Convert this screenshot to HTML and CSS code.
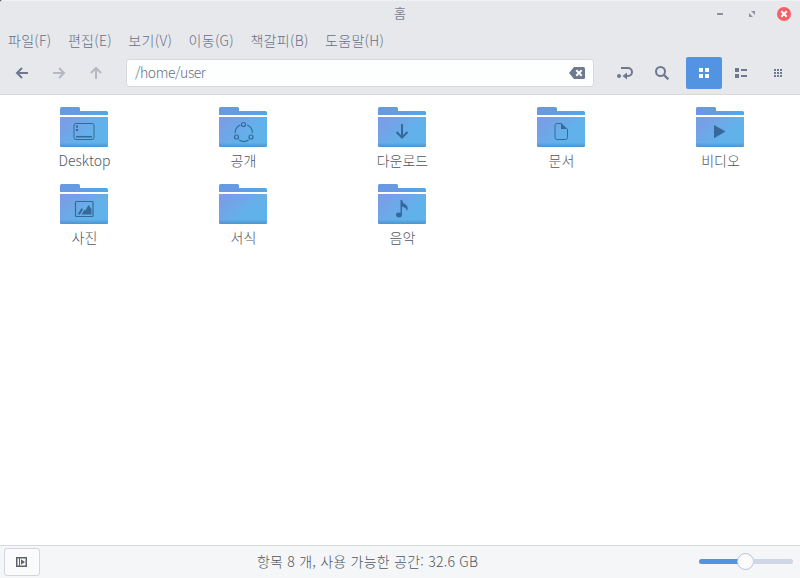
FILE: index.html
```html
<!DOCTYPE html>
<html lang="ko">
<head>
<meta charset="utf-8">
<title>홈</title>
<link rel="stylesheet" href="styles.css">
</head>
<body>
<svg class="defs" width="0" height="0">
  <defs>
    <linearGradient id="front" x1="0" y1="0.15" x2="1" y2="0.85">
      <stop offset="0.1" stop-color="#789fe6"/><stop offset="0.6" stop-color="#62b1ea"/><stop offset="1" stop-color="#5fb3ea"/>
    </linearGradient>
    <linearGradient id="back" x1="0" y1="0" x2="1" y2="0">
      <stop offset="0.3" stop-color="#6999e2"/><stop offset="1" stop-color="#4fa8e8"/>
    </linearGradient>
    <linearGradient id="shade" x1="0" y1="0" x2="0" y2="1">
      <stop offset="0.85" stop-color="#3478c4" stop-opacity="0"/><stop offset="1" stop-color="#3478b8" stop-opacity="0.5"/>
    </linearGradient>
    <symbol id="folder" viewBox="0 0 48 40">
      <path fill="url(#back)" d="M0 8V1.5Q0 0 1.5 0H18.5Q20 0 20 1.500V4H46.500Q48 4 48 5.500V8Z"/>
      <path fill="url(#front)" d="M0 10H48V38.500Q48 40 46.500 40H1.500Q0 40 0 38.500Z"/>
      <path fill="url(#shade)" d="M0 10H48V38.500Q48 40 46.500 40H1.500Q0 40 0 38.500Z"/>
    </symbol>
  </defs>
</svg>
<div class="window">
  <header class="chrome">
    <div class="titlebar">
      <span class="title">홈</span>
      <div class="controls">
        <svg width="14" height="14"><path fill="#8d929f" d="M4 6h6v2H4z"/></svg>
        <svg width="14" height="14"><path fill="#8d929f" d="M6 4h4v4zM4 6v4h4z"/></svg>
        <svg width="14" height="14"><circle cx="7" cy="7" r="7" fill="#f46067"/><path stroke="#fff" stroke-width="2" d="M4.300 4.300l5.400 5.400M9.700 4.300l-5.400 5.400"/></svg>
      </div>
    </div>
    <nav class="menu">
      <span>파일(F)</span><span>편집(E)</span><span>보기(V)</span><span>이동(G)</span><span>책갈피(B)</span><span>도움말(H)</span>
    </nav>
    <div class="toolbar">
      <div class="nav">
        <svg class="arrow" width="14" height="14"><path d="M13 7H2.500M7 2L2 7l5 5"/></svg>
        <svg class="arrow off" width="14" height="14"><path d="M1 7h10.500M7 2l5 5-5 5"/></svg>
        <svg class="arrow off" width="14" height="14"><path d="M7 13V2.500M2 7l5-5 5 5"/></svg>
      </div>
      <div class="path"><span>/home/user</span>
        <svg width="16" height="12"><path fill="#6e788f" d="M0 6L5 0h9.500Q16 0 16 1.500v9Q16 12 14.500 12H5z"/><path stroke="#fff" stroke-width="2" d="M7.300 3.300l5.400 5.400M12.700 3.300L7.300 8.700"/></svg>
      </div>
      <div class="tools">
        <div class="tool"><svg width="16" height="14"><circle cx="2" cy="10" r="2" fill="#6e788f"/><path fill="none" stroke="#6e788f" stroke-width="2" d="M4 2h7a4 4 0 0 1 0 8H8"/><path fill="#6e788f" d="M10 6.500v7L5.500 10z"/></svg></div>
        <div class="tool"><svg width="14" height="14"><circle cx="5.500" cy="5.500" r="4.500" fill="none" stroke="#6e788f" stroke-width="2"/><path stroke="#6e788f" stroke-width="2.300" d="M8.700 8.700L13.300 13.300"/></svg></div>
        <div class="tool active"><svg width="10" height="10"><path fill="#fff" d="M0 0h4v4H0zM6 0h4v4H6zM0 6h4v4H0zM6 6h4v4H6z"/></svg></div>
        <div class="tool"><svg width="12" height="10"><path fill="#6e788f" d="M0 0h4v4H0zM6 1h6v2H6zM0 6h4v4H0zM6 7h6v2H6z"/></svg></div>
        <div class="tool"><svg width="8" height="8"><path fill="#6e788f" d="M0 0h2v2H0zM3 0h2v2H3zM6 0h2v2H6zM0 3h2v2H0zM3 3h2v2H3zM6 3h2v2H6zM0 6h2v2H0zM3 6h2v2H3zM6 6h2v2H6z"/></svg></div>
      </div>
    </div>
  </header>
  <main class="files">
    <div class="file"><svg width="48" height="40"><use href="#folder"/><g fill="none" stroke="#36699a"><rect x="14" y="16.500" width="20" height="16" rx="2"/><path stroke-width="1.500" d="M16 29.700h16"/></g><path fill="#36699a" d="M16 18.500h2v2h-2zM16 22h2v2h-2z"/></svg><span>Desktop</span></div>
    <div class="file"><svg width="48" height="40"><use href="#folder"/><g fill="none" stroke="#36699a" stroke-width="1.200"><circle cx="24.500" cy="17.500" r="2"/><circle cx="17.500" cy="30" r="2"/><circle cx="32" cy="30" r="2"/><path d="M21.300 18a8.700 8.700 0 0 0-5.200 8.300M28.200 18a8.700 8.700 0 0 1 5.200 8.300M20 33a8.700 8.700 0 0 0 9.600 0"/></g></svg><span>공개</span></div>
    <div class="file"><svg width="48" height="40"><use href="#folder"/><path fill="none" stroke="#36699a" stroke-width="2" d="M24 17v13.500M18.500 25l5.500 5.500 5.500-5.500"/></svg><span>다운로드</span></div>
    <div class="file"><svg width="48" height="40"><use href="#folder"/><path fill="none" stroke="#36699a" d="M24.500 16.500H20q-2 0-2 2V30.500q0 2 2 2h8.500q2 0 2-2V22"/><path fill="#36699a" d="M24 16l6.500 6H24z"/></svg><span>문서</span></div>
    <div class="file"><svg width="48" height="40"><use href="#folder"/><path fill="#36699a" d="M18 18l11.500 6.500L18 31.300z"/></svg><span>비디오</span></div>
    <div class="file"><svg width="48" height="40"><use href="#folder"/><rect x="15.500" y="17.500" width="17.500" height="15" rx="1" fill="none" stroke="#36699a" stroke-width="1.200"/><path fill="#36699a" d="M17.500 30.500l4-6.500 1.500 1.500-3 5zM21.500 30.500l3-5 1 1 3-5.500 3 4v5.500z"/></svg><span>사진</span></div>
    <div class="file"><svg width="48" height="40"><use href="#folder"/></svg><span>서식</span></div>
    <div class="file"><svg width="48" height="40"><use href="#folder"/><ellipse cx="21" cy="31" rx="3" ry="2.400" fill="#36699a"/><path fill="#36699a" d="M22.500 16H24q.5 3 3.500 4.500 3.500 2.500 1.500 6.500-.5-3.500-5-4.500V31h-1.500z"/></svg><span>음악</span></div>
  </main>
  <footer class="status">
    <div class="pane"><svg width="11" height="10"><rect x="0.750" y="0.750" width="9.500" height="8.500" fill="none" stroke="#5c616c" stroke-width="1.500"/><path fill="#5c616c" d="M3 1h1v8H3zM5 2.200L9 5 5 7.800z"/></svg></div>
    <span class="summary">항목 8 개, 사용 가능한 공간: 32.6 GB</span>
    <div class="slider"><div class="done"></div><div class="knob"></div><div class="rest"></div></div>
  </footer>
</div>
</body>
</html>
```

FILE: styles.css
```css
* { box-sizing: border-box; }
body { margin: 0; background: #fff; font: 300 14px/20px "Noto Sans CJK KR", sans-serif; color: #50555f; }
svg { display: block; flex: none; }
.defs { position: absolute; }
.window { display: flex; flex-direction: column; height: 578px; background: linear-gradient(135deg, #45636a 2px, transparent 2px); }
.chrome { height: 95px; background: #e7e8eb; border-top: 1px solid #f0f1f3; border-bottom: 1px solid #d7d9df; border-top-left-radius: 3px; color: #667087; }
.titlebar { height: 26px; display: grid; grid-template-columns: 1fr auto 1fr; align-items: center; }
.title { grid-column: 2; color: #7a8192; font-weight: 400; font-size: 13px; line-height: 18px; padding-bottom: 2px; }
.controls { display: flex; justify-content: flex-end; gap: 18px; padding-right: 9px; }
.menu { display: flex; height: 27px; align-items: center; gap: 16.4px; padding: 0 0 1px 8px; letter-spacing: 0.3px; }
.toolbar { display: flex; height: 38px; align-items: center; }
.nav { display: flex; width: 126px; padding-left: 15px; gap: 23px; }
.arrow { fill: none; stroke: #6e788f; stroke-width: 2; }
.off { stroke: #b3b8c3; }
.path { width: 468px; height: 28px; background: #fdfefe; border: 1px solid #d7d9e1; border-radius: 3px; display: flex; align-items: center; justify-content: space-between; padding: 0 8px; }
.path span { letter-spacing: -0.45px; padding-bottom: 2px; }
.tools { display: flex; margin-left: 13px; gap: 1px; }
.tool { width: 36px; height: 32px; display: flex; align-items: center; justify-content: center; border-radius: 2px; }
.tool.active { background: #5294e2; margin-left: 5px; }
.files { flex: 1; display: grid; grid-template-columns: repeat(5, 159px); grid-auto-rows: 77px; align-content: start; padding: 12px 0 0 4.5px; }
.file { display: flex; flex-direction: column; align-items: center; gap: 3px; }
.file span { padding-left: 1px; }
.status { height: 33px; background: #f5f6f8; border-top: 1px solid #d9dadd; display: grid; grid-template-columns: 100px 1fr 102px; align-items: center; }
.pane { width: 36px; height: 28px; margin-left: 4px; border: 1px solid #cfd6e6; border-radius: 3px; background: #fbfbfc; display: flex; align-items: center; justify-content: center; padding: 0 1px 1px 0; }
.summary { padding: 0 0 2px 157px; white-space: nowrap; letter-spacing: 0.23px; }
.slider { display: flex; align-items: center; width: 94px; margin: 0 0 1px 1px; }
.done { width: 39px; height: 5px; background: #5294e2; border-radius: 3px 0 0 3px; }
.knob { width: 17px; height: 17px; border: 1px solid #b7c0d6; border-radius: 50%; background: #fcfcfd; margin: 0 -1px; }
.rest { flex: 1; height: 5px; background: #cfd6e6; border-radius: 0 3px 3px 0; }
```
